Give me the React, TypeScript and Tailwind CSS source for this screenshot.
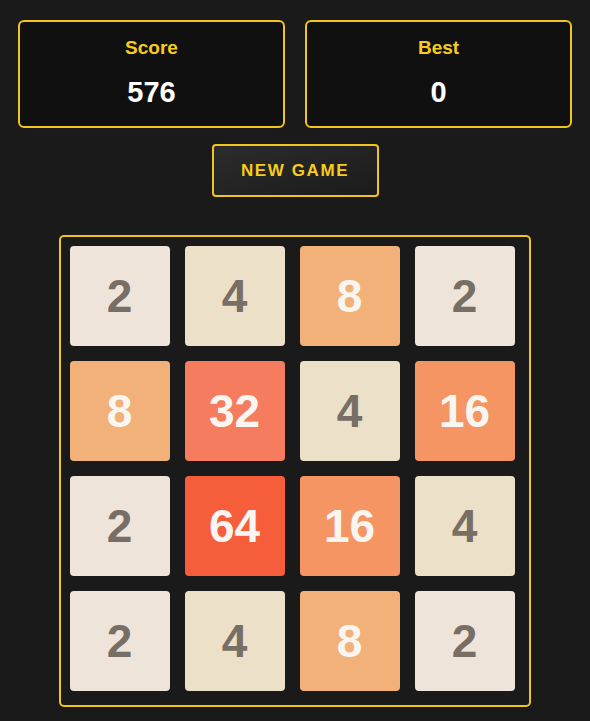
const BOARD = [
  [2, 4, 8, 2],
  [8, 32, 4, 16],
  [2, 64, 16, 4],
  [2, 4, 8, 2],
];

const TILE_STYLE: Record<number, string> = {
  2: "bg-[#eee4da] text-[#776e65]",
  4: "bg-[#ede0c8] text-[#776e65]",
  8: "bg-[#f2b179] text-[#f9f6f2]",
  16: "bg-[#f59563] text-[#f9f6f2]",
  32: "bg-[#f67c5f] text-[#f9f6f2]",
  64: "bg-[#f65e3b] text-[#f9f6f2]",
};

function StatBox({ label, value }: { label: string; value: number }) {
  return (
    <div className="flex h-[108px] flex-1 flex-col items-center rounded-[6px] border-2 border-[#f2c41c] bg-[#101010] pt-[14px]">
      <div className="text-[19px] leading-[23px] font-bold text-[#f7cc1a]">{label}</div>
      <div className="mt-[16px] text-[29px] leading-[34px] font-bold text-white">{value}</div>
    </div>
  );
}

function Tile({ value }: { value: number }) {
  return (
    <div
      className={`flex h-[100px] w-[100px] items-center justify-center rounded-[4px] text-[46px] font-bold ${TILE_STYLE[value]}`}
    >
      {value}
    </div>
  );
}

export default function App() {
  return (
    <div
      className="min-h-[721px] w-full bg-[#1a1a1a] px-[18px] pt-[20px]"
      style={{ fontFamily: '"Liberation Sans", Arial, sans-serif' }}
    >
      <div className="flex gap-5">
        <StatBox label="Score" value={576} />
        <StatBox label="Best" value={0} />
      </div>

      <div className="mt-[16px] flex justify-center">
        <button className="h-[53px] w-[167px] rounded-[4px] border-2 border-[#f2c41c] bg-gradient-to-br from-[#2c2c2c] to-[#1b1b1b] text-[17px] font-bold tracking-[1.6px] text-[#f7cc1a]">
          NEW GAME
        </button>
      </div>

      <div className="mt-[38px] flex justify-center">
        <div className="mr-[1px] h-[472px] w-[472px] rounded-[5px] border-2 border-[#f2c41c] bg-[#1a1a1a] p-[9px]">
          <div className="grid grid-cols-[repeat(4,100px)] gap-[15px]">
            {BOARD.flat().map((v, i) => (
              <Tile key={i} value={v} />
            ))}
          </div>
        </div>
      </div>
    </div>
  );
}
